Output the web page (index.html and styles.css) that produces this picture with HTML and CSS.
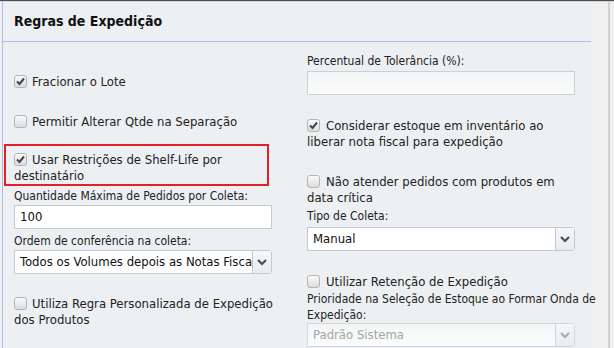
FILE: index.html
```html
<!DOCTYPE html>
<html lang="pt-BR">
<head>
  <meta charset="UTF-8">
  <meta name="viewport" content="width=device-width, initial-scale=1.0">
  <title>Regras de Expedição</title>
  <link rel="stylesheet" href="styles.css">
</head>
<body>

<div class="top-line"></div>
<div class="page">
  <div class="panel">
    <h2 class="panel-title">Regras de Expedição</h2>

    <div class="panel-body">
      <div class="col col-left">
        <label class="check row-fracionar">
          <span class="box checked"><svg width="11" height="11" viewBox="0 0 11 11"><path d="M2 5.5 L4.5 8 L9 2.5" fill="none" stroke="#444" stroke-width="2"/></svg></span>Fracionar o Lote
        </label>

        <label class="check row-permitir">
          <span class="box"></span>Permitir Alterar Qtde na Separação
        </label>

        <div class="highlight">
          <label class="check">
            <span class="box checked"><svg width="11" height="11" viewBox="0 0 11 11"><path d="M2 5.5 L4.5 8 L9 2.5" fill="none" stroke="#444" stroke-width="2"/></svg></span>Usar Restrições de Shelf-Life por destinatário
          </label>
        </div>

        <div class="label row-qtde">Quantidade Máxima de Pedidos por Coleta:</div>
        <div class="field row-after-label">100</div>

        <div class="label row-ordem">Ordem de conferência na coleta:</div>
        <div class="select row-after-label">
          <span class="select-text">Todos os Volumes depois as Notas Fiscais</span>
          <span class="select-btn"><svg width="10" height="7" viewBox="0 0 10 7"><path d="M1 1 L5 5 L9 1" fill="none" stroke="#3f535c" stroke-width="2.2"/></svg></span>
        </div>

        <label class="check row-utiliza">
          <span class="box"></span>Utiliza Regra Personalizada de Expedição dos Produtos
        </label>
      </div>

      <div class="col col-right">
        <div class="label row-percentual">Percentual de Tolerância (%):</div>
        <div class="field disabled row-after-percentual"></div>

        <label class="check row-considerar">
          <span class="box checked"><svg width="11" height="11" viewBox="0 0 11 11"><path d="M2 5.5 L4.5 8 L9 2.5" fill="none" stroke="#444" stroke-width="2"/></svg></span>Considerar estoque em inventário ao liberar nota fiscal para expedição
        </label>

        <label class="check row-nao">
          <span class="box"></span>Não atender pedidos com produtos em data crítica
        </label>

        <div class="label row-tipo">Tipo de Coleta:</div>
        <div class="select row-after-tipo">
          <span class="select-text">Manual</span>
          <span class="select-btn"><svg width="10" height="7" viewBox="0 0 10 7"><path d="M1 1 L5 5 L9 1" fill="none" stroke="#3f535c" stroke-width="2.2"/></svg></span>
        </div>

        <label class="check row-retencao">
          <span class="box"></span>Utilizar Retenção de Expedição
        </label>

        <div class="label row-prioridade">Prioridade na Seleção de Estoque ao Formar Onda de Expedição:</div>
        <div class="select disabled">
          <span class="select-text">Padrão Sistema</span>
          <span class="select-btn"><svg width="10" height="7" viewBox="0 0 10 7"><path d="M1 1 L5 5 L9 1" fill="none" stroke="#a3acb1" stroke-width="2"/></svg></span>
        </div>
      </div>
    </div>
  </div>
  <div class="scroll-edge"></div>
</div>

</body>
</html>
```

FILE: styles.css
```css
body {
  margin: 0;
  padding: 0;
  background-color: #f0f0f0;
  font-family: "DejaVu Sans Condensed", "DejaVu Sans", sans-serif;
  font-size: 12px;
  color: #222;
  overflow: hidden;
}
.top-line {
  height: 1px;
  background-color: #4d4d4d;
  border-bottom: 1px solid #d6d6d6;
}
.page {
  display: flex;
  height: 346px;
}
.panel {
  margin-left: 2px;
  width: 588px;
  border-left: 1px solid #a9bfe3;
  background-color: #edf0f2;
}
.panel-title {
  margin: 0;
  height: 39px;
  line-height: 38px;
  padding-left: 11px;
  font-size: 14px;
  font-weight: bold;
  color: #111;
  border-bottom: 1px solid #a9c0e2;
}
.panel-body {
  display: grid;
  grid-template-columns: 258px 268px;
  column-gap: 35px;
  padding-left: 11px;
}
.col {
  display: flex;
  flex-direction: column;
}
.label {
  line-height: 16px;
}
.check {
  display: block;
  line-height: 16px;
  font-size: 13px;
}
.box {
  display: inline-block;
  box-sizing: border-box;
  width: 13px;
  height: 13px;
  margin-right: 5px;
  vertical-align: -2px;
  border: 1px solid #b4b4b4;
  border-radius: 3px;
  background: linear-gradient(#fbfbfb, #dcdcdc);
  position: relative;
}
.box svg {
  position: absolute;
  left: 0;
  top: 0;
}
.col-right .box {
  margin-right: 6px;
}
.field {
  box-sizing: border-box;
  height: 24px;
  line-height: 22px;
  padding-left: 5px;
  font-size: 13px;
  border: 1px solid #c4c8d6;
  background-color: #fff;
  color: #111;
}
.field.disabled {
  border-color: #cdd1d4;
  background: linear-gradient(#f4f6f6, #fbfbfb);
}
.select {
  box-sizing: border-box;
  display: flex;
  height: 24px;
  font-size: 13px;
  border: 1px solid #c4c8d6;
  border-radius: 0 3px 3px 0;
  background-color: #fff;
  color: #111;
}
.select-text {
  flex: 1;
  overflow: hidden;
  white-space: nowrap;
  line-height: 22px;
  padding-left: 5px;
}
.select-btn {
  width: 18px;
  border-left: 1px solid #c4c8d6;
  background: linear-gradient(#f6f7f8, #e9ecee);
  display: flex;
  align-items: center;
  justify-content: center;
}
.select.disabled {
  border-color: #d3d6da;
  background: linear-gradient(#f4f6f6, #fbfbfb);
  color: #a6a6a6;
}
.select.disabled .select-btn {
  border-left-color: #d3d6da;
}
.highlight {
  box-sizing: border-box;
  width: 265px;
  margin: 14px 0 0 -10px;
  padding: 6px 0 0 8px;
  border: 2px solid #e3202a;
}

/* vertical rhythm, left column */
.row-fracionar { margin-top: 32px; }
.row-permitir { margin-top: 24px; }
.row-qtde { margin-top: 2px; }
.row-after-label { margin-top: 1px; }
.row-ordem { margin-top: 4px; }
.row-utiliza {
  margin-top: 22px;
  margin-right: -10px;
}

/* vertical rhythm, right column */
.row-percentual { margin-top: 11px; }
.row-after-percentual { margin-top: 2px; }
.row-considerar { margin-top: 23px; }
.row-nao { margin-top: 24px; }
.row-tipo { margin-top: 2px; }
.row-after-tipo { margin-top: 3px; }
.row-retencao { margin-top: 23px; }
.row-prioridade {
  margin-top: 1px;
  margin-right: -22px;
}

.scroll-edge {
  margin-left: 17px;
  width: 2px;
  background-color: #d2d2d2;
}
```
